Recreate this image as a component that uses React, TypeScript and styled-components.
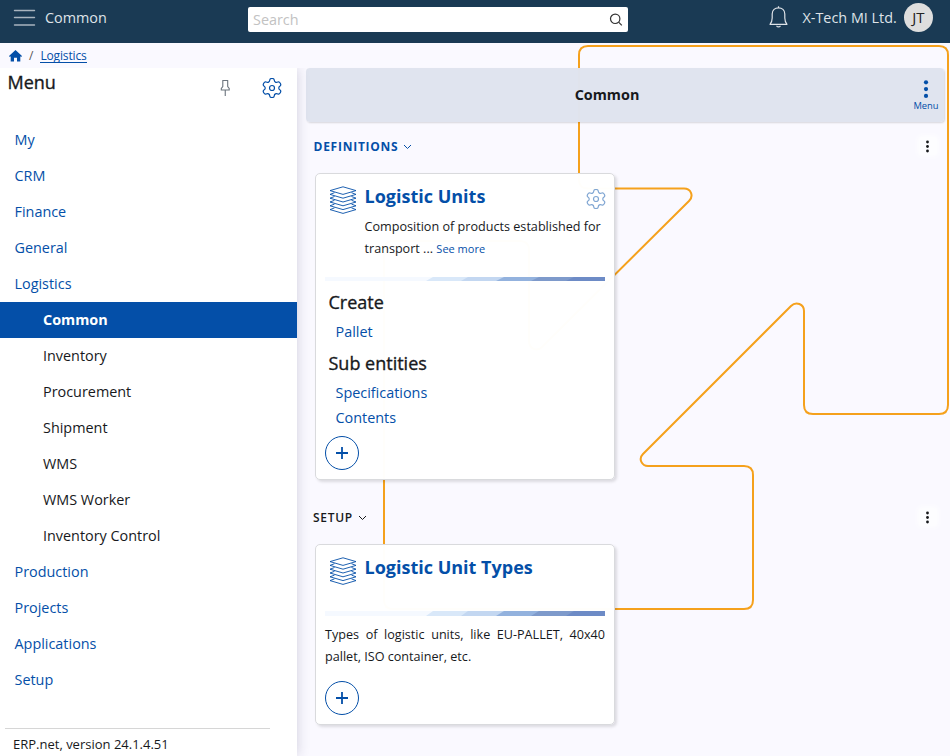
import React from "react";
import styled, { createGlobalStyle, css } from "styled-components";

const BLUE = "#044fa8";

const GlobalStyle = createGlobalStyle`
  *, *::before, *::after { box-sizing: border-box; }
  html, body { margin: 0; padding: 0; overflow: hidden; }
  body { font-family: "Open Sans", "Noto Sans", sans-serif; color: #17191c; background: #faf9ff; }
  h1, h2, h3, p { margin: 0; font-weight: inherit; font-size: inherit; }
  svg { display: block; }
`;

const Page = styled.div`
  display: flex;
  flex-direction: column;
  width: 950px;
  height: 756px;
  overflow: hidden;
  position: relative;
  isolation: isolate;
`;

const Backdrop = styled.svg`
  position: absolute;
  inset: 0;
  z-index: -1;
`;

const TopBar = styled.header`
  display: flex;
  align-items: flex-start;
  height: 43px;
  background: #1a3a54;
  color: #dfe3e8;
  padding-left: 13px;
`;

const TopTitle = styled.div`
  width: 203px;
  margin-left: 9px;
  padding-top: 8px;
  font-size: 14.4px;
  line-height: 20px;
`;

const SearchBox = styled.div`
  display: flex;
  align-items: center;
  justify-content: space-between;
  width: 380px;
  height: 25px;
  margin-top: 7px;
  padding: 0 5px;
  border-radius: 2px;
  background: #fff;
  color: #c2c2c2;
  font-size: 14.4px;
`;

const BellSlot = styled.div`
  margin: 6px 0 0 141px;
`;

const Company = styled.div`
  width: 101.5px;
  margin-left: 13.5px;
  padding-top: 8px;
  font-size: 14.4px;
  line-height: 20px;
  white-space: nowrap;
`;

const Avatar = styled.div`
  width: 29px;
  height: 29px;
  margin-top: 3px;
  border-radius: 50%;
  background: #dedede;
  color: #222;
  font-size: 15px;
  line-height: 29px;
  text-align: center;
`;

const Crumbs = styled.nav`
  display: flex;
  align-items: center;
  height: 25px;
  padding-left: 9px;
  font-size: 12px;
  color: #555;
`;

const CrumbSlash = styled.span`
  margin: 0 7px;
`;

const CrumbLink = styled.a`
  color: ${BLUE};
  border-bottom: 1px solid ${BLUE};
  line-height: 13px;
  letter-spacing: -0.15px;
`;

const Body = styled.div`
  display: flex;
  flex: 1;
  min-height: 0;
`;

const Sidebar = styled.aside`
  display: flex;
  flex-direction: column;
  width: 297px;
  background: #fff;
  box-shadow: 0 0 12px rgba(40, 35, 80, 0.2);
  clip-path: inset(0 -20px 0 0);
`;

const SideHead = styled.div`
  display: flex;
  height: 54px;
  padding-left: 7.5px;
`;

const SideTitle = styled.h2`
  width: 212.5px;
  padding-top: 1px;
  font-size: 18px;
  line-height: 26px;
  -webkit-text-stroke: 0.35px currentColor;
`;

const PinSlot = styled.div`
  width: 42px;
  padding-top: 11px;
`;

const GearSlot = styled.div`
  padding-top: 10px;
`;

const NavItem = styled.a<{ $sub?: boolean; $active?: boolean }>`
  height: 36px;
  padding-left: ${(p) => (p.$sub ? 43 : 14.5)}px;
  line-height: 36px;
  font-size: 14.4px;
  color: ${(p) => (p.$sub ? "#17191c" : BLUE)};
  ${(p) => p.$active && css`
    background: ${BLUE};
    color: #fff;
    font-weight: 700;
  `}
`;

const Version = styled.div`
  width: 265px;
  margin: auto 0 0 5px;
  height: 28px;
  padding-left: 8px;
  border-top: 1px solid #d6d6d6;
  font-size: 13px;
  line-height: 31px;
`;

const Main = styled.main`
  flex: 1;
  padding-left: 9px;
`;

const Banner = styled.div`
  display: flex;
  height: 54px;
  width: 638px;
  border-radius: 4px;
  background: rgba(224, 228, 239, 0.99);
  box-shadow: 1px 1px 2px rgba(0, 0, 0, 0.14);
`;

const BannerTitle = styled.h1`
  flex: none;
  width: 602px;
  font-size: 14.4px;
  font-weight: 700;
  line-height: 53px;
  text-align: center;
`;

const BannerMenu = styled.div`
  display: flex;
  flex-direction: column;
  align-items: center;
  width: 36px;
  padding-top: 12px;
  font-size: 9.4px;
  line-height: 13px;
  color: ${BLUE};
`;

const SectionHead = styled.div<{ $open?: boolean }>`
  display: flex;
  align-items: center;
  height: ${(p) => (p.$open ? 51 : 64)}px;
  padding: ${(p) => (p.$open ? "0 13px 3px 7.5px" : "13px 13px 3px 7px")};
  font-size: 12px;
  font-weight: ${(p) => (p.$open ? 700 : 600)};
  letter-spacing: ${(p) => (p.$open ? 0.75 : 0.7)}px;
  color: ${(p) => (p.$open ? BLUE : "#17191c")};
`;

const SectionDots = styled.div`
  display: flex;
  align-items: center;
  justify-content: center;
  width: 18px;
  height: 18px;
  margin-left: auto;
  border-radius: 4px;
  background: #fdfdff;
  box-shadow: 0 0 4px 2px #fdfdff;
  color: #17191c;
`;

const ChevronSlot = styled.span`
  margin: 2px 0 0 5px;
`;

const Card = styled.section<{ $height: number }>`
  display: flex;
  flex-direction: column;
  width: 300px;
  height: ${(p) => p.$height}px;
  margin-left: 9px;
  padding: 0 9px 9px;
  border: 1px solid #d9dadd;
  border-radius: 5px;
  background: rgba(255, 255, 255, 0.985);
  box-shadow: 2px 2px 3px rgba(0, 0, 0, 0.12);
`;

const CardHead = styled.div<{ $height: number }>`
  display: flex;
  height: ${(p) => p.$height}px;
`;

const StackSlot = styled.div`
  flex: none;
  width: 39.5px;
  padding: 12px 0 0 4px;
`;

const CardText = styled.div`
  flex: 1;
  padding-top: 10px;
`;

const CardTitleRow = styled.div`
  display: flex;
  justify-content: space-between;
  height: 32px;
`;

const CardTitle = styled.h2`
  font-size: 18px;
  font-weight: 700;
  line-height: 25px;
  color: ${BLUE};
  white-space: nowrap;
`;

const CardGear = styled.div`
  margin-right: -1px;
  padding-top: 5px;
  opacity: 0.5;
`;

const Description = styled.p`
  font-size: 12.62px;
  line-height: 22px;
  white-space: nowrap;
`;

const Summary = styled.p`
  padding-top: 8px;
  font-size: 12.62px;
  line-height: 22px;
  text-align: justify;
`;

const SeeMore = styled.a`
  font-size: 11px;
  color: ${BLUE};
`;

const Stripe = styled.svg`
  flex: none;
`;

const GroupTitle = styled.h3`
  height: 36px;
  padding: 3px 0 0 3.5px;
  font-size: 18px;
  line-height: 36px;
  -webkit-text-stroke: 0.35px currentColor;
`;

const LinkList = styled.div`
  display: flex;
  flex-direction: column;
  padding: 2px 0 0 10.5px;
  margin-bottom: -2px;
`;

const EntityLink = styled.a`
  font-size: 14.4px;
  line-height: 25px;
  color: ${BLUE};
`;

const AddButton = styled.button`
  display: flex;
  align-items: center;
  justify-content: center;
  width: 34px;
  height: 34px;
  margin-top: auto;
  padding: 0;
  border: 1px solid ${BLUE};
  border-radius: 50%;
  background: transparent;
`;

const BackgroundLine = () => (
  <Backdrop width="950" height="756" fill="none" stroke="#f5a11c" strokeWidth="2">
    <path d="M588 46H939Q948 46 948 55V405Q948 414 939 414H813Q804 414 804 405V311C804 304 796 301 791 306L643 454C638 459 642 466 648 466H744Q753 466 753 475V600Q753 609 744 609H393Q384 609 384 600V250Q384 241 393 241H520Q529 241 529 250V341C529 349 537 352 542 347L689 201C694 196 691 188.500 684 188.500H588Q579 188.500 579 180V55Q579 46 588 46Z" />
  </Backdrop>
);

const Hamburger = () => (
  <svg width="23" height="35" fill="none" stroke="#a9b4be" strokeWidth="1.4" strokeLinecap="round">
    <path d="M1.500 10.500H21.500M1.500 17.500H21.500M1.500 25H21.500" />
  </svg>
);

const SearchIcon = () => (
  <svg width="14" height="14" fill="none" stroke="#333" strokeWidth="1.2">
    <circle cx="6.2" cy="5.800" r="4.700" />
    <path d="M9.600 9.200L12.800 12.400" />
  </svg>
);

const Bell = () => (
  <svg width="20" height="23" fill="none" stroke="#dfe3e8" strokeWidth="1.200" strokeLinejoin="round">
    <path d="M9.500 0.300V2M1 18.300C2.500 16.500 3.200 15 3.200 12V8C3.200 4 6 1.800 9.500 1.800S15.800 4 15.800 8V12C15.800 15 16.500 16.500 18 18.300ZM7.500 19.800Q9.500 22 11.500 19.800" />
  </svg>
);

const Home = () => (
  <svg width="13" height="12" fill={BLUE}>
    <path d="M6.500 0L13 6L12.200 6.900L11.300 6.200V11.500H8V7.800H5V11.500H1.700V6.200L0.800 6.900L0 6Z" />
  </svg>
);

const Pin = () => (
  <svg width="11" height="18" fill="none" stroke="#6b747d" strokeWidth="1.100">
    <path d="M2.300 1.500H8.200M2.800 1.500V7.500L1.300 9.500V11H9.200V9.500L7.700 7.500V1.500M5.250 11V17" />
  </svg>
);

// Six rounded teeth, each corner smoothed by a quadratic through edge midpoints.
const gearOutline = (() => {
  const corners: number[][] = [];
  for (let tooth = 0; tooth < 6; tooth++) {
    for (const [offset, radius] of [[-13, 9.8], [13, 9.8], [19, 6.9], [41, 6.9]]) {
      const angle = ((tooth * 60 - 90 + offset) * Math.PI) / 180;
      corners.push([10 + radius * Math.cos(angle), 10 + radius * Math.sin(angle)]);
    }
  }
  const middle = (a: number[], b: number[]) =>
    `${((a[0] + b[0]) / 2).toFixed(2)} ${((a[1] + b[1]) / 2).toFixed(2)}`;
  const last = corners[corners.length - 1];
  return (
    `M${middle(last, corners[0])}` +
    corners
      .map((c, i) => `Q${c[0].toFixed(2)} ${c[1].toFixed(2)} ${middle(c, corners[(i + 1) % corners.length])}`)
      .join("") +
    "Z"
  );
})();

const Gear = () => (
  <svg width="20" height="20" viewBox="0 0 20 20" fill="none" stroke={BLUE} strokeWidth="1.200">
    <path d={gearOutline} />
    <circle cx="10" cy="10" r="2.500" />
  </svg>
);

const Dots = ({ large }: { large?: boolean }) => (
  <svg width="6" height={large ? 19 : 13} fill={large ? BLUE : "#17191c"}>
    {[0, 1, 2].map((i) => (
      <circle key={i} cx={large ? 3 : 2.5} cy={large ? 2.3 + i * 6.8 : 2 + i * 4.5} r={large ? 2.1 : 1.4} />
    ))}
  </svg>
);

const Chevron = () => (
  <svg width="9" height="6" fill="none" stroke="currentColor" strokeWidth="1">
    <path d="M1 1L4.500 4.500L8 1" />
  </svg>
);

const Stack = () => (
  <svg width="28" height="29" fill="none" stroke={BLUE} strokeWidth="0.9" strokeLinejoin="round">
    <path d="M14 0.800L27 4.600L14 8.400L1 4.600Z" />
    {[8.4, 12.2, 16, 19.8, 23.6].map((y) => (
      <path key={y} d={`M5.500 ${y - 1.7}L1 ${y}L14 ${y + 3.8}L27 ${y}L22.500 ${y - 1.7}`} />
    ))}
  </svg>
);

const Divider = ({ height }: { height: number }) => (
  <Stripe width="280" height={height} viewBox="0 0 280 4" preserveAspectRatio="none">
    <path d="M0 0H280V4H0Z" fill="#f5f9ff" />
    <path d="M108 0H280V4H101Z" fill="#d9e8f9" />
    <path d="M143 0H280V4H136Z" fill="#c3d7f1" />
    <path d="M179 0H280V4H171Z" fill="#93b2de" />
    <path d="M214 0H280V4H206Z" fill="#7e9acb" />
    <path d="M249 0H280V4H241Z" fill="#6d8bc6" />
  </Stripe>
);

const Plus = () => (
  <svg width="14" height="14" stroke={BLUE} strokeWidth="1.800">
    <path d="M1 7H13M7 1V13" />
  </svg>
);

const NAV = [
  ["My"], ["CRM"], ["Finance"], ["General"], ["Logistics"],
  ["Common", "active"], ["Inventory", "sub"], ["Procurement", "sub"], ["Shipment", "sub"],
  ["WMS", "sub"], ["WMS Worker", "sub"], ["Inventory Control", "sub"],
  ["Production"], ["Projects"], ["Applications"], ["Setup"],
];

export default function App() {
  return (
    <Page>
      <GlobalStyle />
      <BackgroundLine />
      <TopBar>
        <Hamburger />
        <TopTitle>Common</TopTitle>
        <SearchBox>Search<SearchIcon /></SearchBox>
        <BellSlot><Bell /></BellSlot>
        <Company>X-Tech MI Ltd.</Company>
        <Avatar>JT</Avatar>
      </TopBar>
      <Crumbs>
        <Home />
        <CrumbSlash>/</CrumbSlash>
        <CrumbLink>Logistics</CrumbLink>
      </Crumbs>
      <Body>
        <Sidebar>
          <SideHead>
            <SideTitle>Menu</SideTitle>
            <PinSlot><Pin /></PinSlot>
            <GearSlot><Gear /></GearSlot>
          </SideHead>
          {NAV.map(([label, kind]) => (
            <NavItem key={label} $sub={!!kind} $active={kind === "active"}>{label}</NavItem>
          ))}
          <Version>ERP.net, version 24.1.4.51</Version>
        </Sidebar>
        <Main>
          <Banner>
            <BannerTitle>Common</BannerTitle>
            <BannerMenu><Dots large />Menu</BannerMenu>
          </Banner>
          <SectionHead $open>
            DEFINITIONS<ChevronSlot><Chevron /></ChevronSlot>
            <SectionDots><Dots /></SectionDots>
          </SectionHead>
          <Card $height={307}>
            <CardHead $height={103}>
              <StackSlot><Stack /></StackSlot>
              <CardText>
                <CardTitleRow>
                  <CardTitle>Logistic Units</CardTitle>
                  <CardGear><Gear /></CardGear>
                </CardTitleRow>
                <Description>
                  Composition of products established for<br />
                  transport ... <SeeMore>See more</SeeMore>
                </Description>
              </CardText>
            </CardHead>
            <Divider height={4} />
            <GroupTitle>Create</GroupTitle>
            <LinkList>
              <EntityLink>Pallet</EntityLink>
            </LinkList>
            <GroupTitle>Sub entities</GroupTitle>
            <LinkList>
              <EntityLink>Specifications</EntityLink>
              <EntityLink>Contents</EntityLink>
            </LinkList>
            <AddButton aria-label="Add"><Plus /></AddButton>
          </Card>
          <SectionHead>
            SETUP<ChevronSlot><Chevron /></ChevronSlot>
            <SectionDots><Dots /></SectionDots>
          </SectionHead>
          <Card $height={181}>
            <CardHead $height={66}>
              <StackSlot><Stack /></StackSlot>
              <CardText>
                <CardTitleRow><CardTitle>Logistic Unit Types</CardTitle></CardTitleRow>
              </CardText>
            </CardHead>
            <Divider height={5} />
            <Summary>
              Types of logistic units, like EU-PALLET, 40x40 pallet, ISO container, etc.
            </Summary>
            <AddButton aria-label="Add"><Plus /></AddButton>
          </Card>
        </Main>
      </Body>
    </Page>
  );
}
